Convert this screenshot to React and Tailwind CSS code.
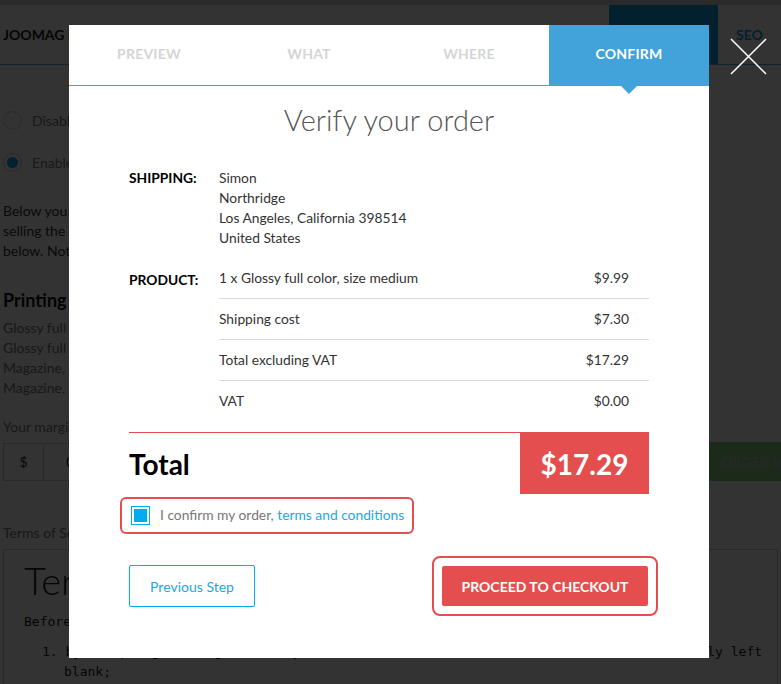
import React from 'react';

const font = { fontFamily: 'Lato, "Open Sans", sans-serif' };
const mono = { fontFamily: '"DejaVu Sans Mono", monospace' };

const Background = () => (
  <div className="w-[781px] h-[684px] bg-white overflow-hidden text-[#1a1a1a]" style={font}>
    <div className="h-[5px] bg-[#d7d7d7]" />
    <div className="h-[60px] flex items-stretch border-b border-[#4aa8e0]">
      <div className="flex-1 flex items-center pl-[3px] font-bold text-[14px] text-[#222]">JOOMAG PRINT</div>
      <div className="w-[109px] bg-[#0fa0e6]" />
      <div className="w-[63px] flex items-center justify-center font-bold text-[14px] text-[#0fa0e6]">SEO</div>
    </div>
    <div className="px-[3px]">
      <div className="mt-[45px] flex items-center gap-[10px] text-[14px] text-[#777]">
        <span className="w-[19px] h-[19px] rounded-full border border-[#ccc]" />
        Disabled
      </div>
      <div className="mt-[21px] flex items-center gap-[10px] text-[14px] text-[#777]">
        <span className="w-[19px] h-[19px] rounded-full border border-[#ccc] flex items-center justify-center">
          <span className="w-[11px] h-[11px] rounded-full bg-[#0fa0e6]" />
        </span>
        Enabled
      </div>
      <div className="mt-[28px] text-[14px] leading-[20px] text-[#333] whitespace-nowrap">
        <div>Below you can find the list of printing options available for your magazine. Mark them wi: if it to make p</div>
        <div>selling the printed copies of your publication. The price is calculated at the current rate and is di</div>
        <div>below. Note that the shipping cost is not included.</div>
      </div>
      <div className="mt-[26px] text-[18px] font-bold text-[#111]">Printing options</div>
      <div className="mt-[4px] text-[14px] leading-[20px] text-[#777]">
        <div>Glossy full color, size small</div>
        <div>Glossy full color, size medium</div>
        <div>Magazine, size small</div>
        <div>Magazine, size medium</div>
      </div>
      <div className="mt-[18px] text-[14px] text-[#777]">Your margin</div>
      <div className="mt-[5px] flex items-center">
        <div className="flex h-[38px] w-[300px] border border-[#ccc] text-[14px]">
          <div className="w-[40px] flex items-center justify-center border-r border-[#ccc]">$</div>
          <div className="flex items-center pl-[22px]">0</div>
        </div>
        <div className="ml-auto mr-[-3px] w-[72px] h-[39px] bg-[#8ed38e] flex items-center pl-[12px] font-bold text-[14px] text-[#c4c4c4] whitespace-nowrap overflow-hidden">ORDER HARD</div>
      </div>
      <div className="mt-[41px] text-[14px] text-[#777]">Terms of Service</div>
      <div className="mt-[6px] border border-[#ccc] h-[200px] px-[20px]">
        <div className="text-[38px] font-light text-[#222] leading-[56px] mt-[2px]">Terms</div>
        <div className="text-[13px] mt-[4px]" style={mono}>Before you start please read the terms below.</div>
        <div className="text-[13px] leading-[20px] mt-[10px] pl-[18px] whitespace-nowrap" style={mono}>
          <div>1. by accepting this agreement, you confirm that the fields have not been intentionally left</div>
          <div className="pl-[22px]">blank;</div>
        </div>
      </div>
    </div>
  </div>
);

const Tab = ({ label, active }) => (
  <div
    className={`relative flex-1 flex items-center justify-center pb-[3px] font-bold text-[14px] tracking-[0.2px] ${active ? 'bg-[#42a2da] text-white' : 'text-[#d5d5d5]'}`}
  >
    {label}
    {active && (
      <span className="absolute left-1/2 -translate-x-1/2 top-full w-0 h-0 border-l-[9px] border-r-[9px] border-t-[9px] border-l-transparent border-r-transparent border-t-[#42a2da]" />
    )}
  </div>
);

const Row = ({ label, price, last }) => (
  <div className={`flex items-center justify-between h-[41px] pr-[20px] ${last ? '' : 'border-b border-[#d9d9d9]'}`}>
    <span>{label}</span>
    <span>{price}</span>
  </div>
);

const App = () => (
  <div className="relative w-[781px] h-[684px] overflow-hidden">
    <Background />
    <div className="absolute inset-0 bg-black/80" />

    <button type="button" className="absolute left-[730px] top-[38px] w-[37px] h-[37px]">
      <svg viewBox="0 0 37 37" className="w-full h-full" fill="none" stroke="white" strokeWidth="1.5">
        <path d="M1 1 L36 36 M36 1 L1 36" />
      </svg>
    </button>

    <div className="absolute left-[69px] top-[25px] w-[640px] h-[633px] bg-white" style={font}>
      <div className="flex h-[61px] border-b-[1.5px] border-[#42a2da]">
        <Tab label="PREVIEW" />
        <Tab label="WHAT" />
        <Tab label="WHERE" />
        <Tab label="CONFIRM" active />
      </div>

      <div className="px-[60px]">
        <h1 className="text-center text-[29px] font-light text-[#555] mt-[16px] leading-[36px]">Verify your order</h1>

        <div className="mt-[30px] flex text-[13.8px] text-[#333]">
          <div className="w-[90px] font-bold text-black leading-[20px]">SHIPPING:</div>
          <div className="leading-[20px]">
            <div>Simon</div>
            <div>Northridge</div>
            <div>Los Angeles, California 398514</div>
            <div>United States</div>
          </div>
        </div>

        <div className="mt-[10px] flex text-[13.8px] text-[#333]">
          <div className="w-[90px] font-bold text-black pt-[12px]">PRODUCT:</div>
          <div className="flex-1">
            <Row label="1 x Glossy full color, size medium" price="$9.99" />
            <Row label="Shipping cost" price="$7.30" />
            <Row label="Total excluding VAT" price="$17.29" />
            <Row label="VAT" price="$0.00" last />
          </div>
        </div>

        <div className="mt-[10px] border-t border-[#e54e4e] flex items-stretch justify-between h-[62px]">
          <div className="flex items-center text-[28px] font-bold text-black">Total</div>
          <div className="w-[129px] bg-[#e54e4e] flex items-center justify-center text-[28px] font-bold text-white">$17.29</div>
        </div>

        <label className="mt-[3px] -ml-[9px] inline-flex items-center h-[37px] pl-[9px] pr-[8px] border-2 border-[#e54e4e] rounded-[6px] text-[13.8px] text-[#777]">
          <span className="w-[19px] h-[19px] border border-[#00aeef] p-[2px] mr-[10px]">
            <span className="block w-full h-full bg-[#00aeef]" />
          </span>
          I confirm my order,&nbsp;<a className="text-[#1aa9e0]">terms and conditions</a>
        </label>

        <div className="mt-[22px] flex items-center justify-between">
          <button type="button" className="w-[126px] h-[42px] border border-[#00aeef] rounded-[2px] text-[14px] text-[#1aa9e0]">Previous Step</button>
          <div className="-mr-[9px] p-[8px] border-2 border-[#e54e4e] rounded-[8px]">
            <button type="button" className="w-[206px] h-[40px] bg-[#e54e4e] rounded-[2px] text-white font-bold text-[14px]">PROCEED TO CHECKOUT</button>
          </div>
        </div>
      </div>
    </div>
  </div>
);

export default App;
